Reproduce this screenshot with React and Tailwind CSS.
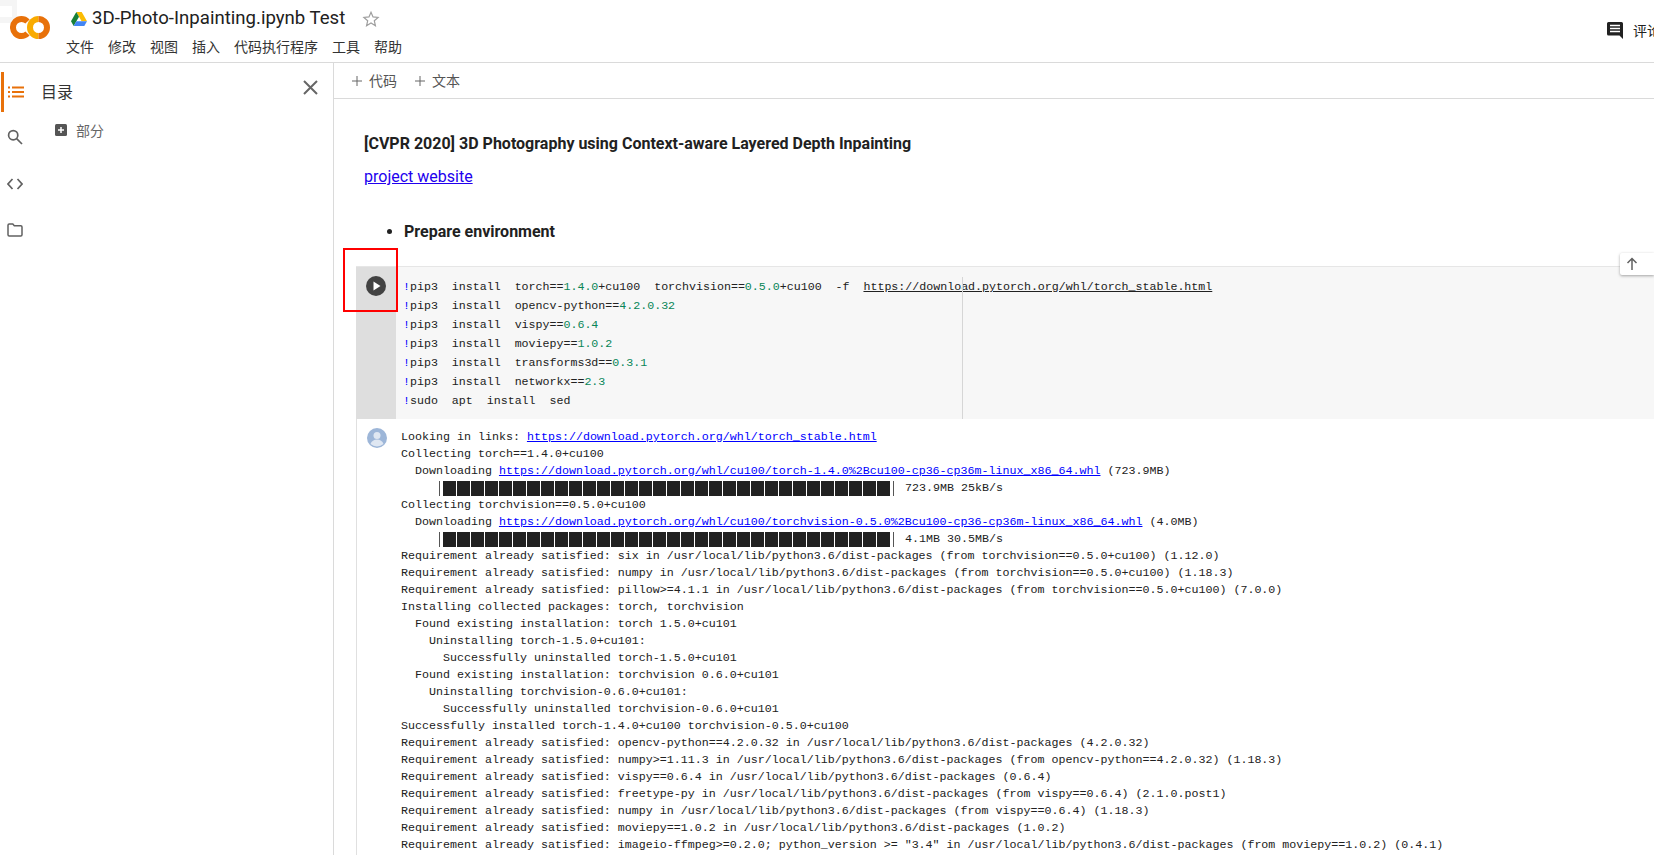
const MONO = { fontFamily: '"Liberation Mono", monospace' };

function Logo() {
  return (
    <svg width="40" height="23" viewBox="0 0 40 23" className="shrink-0">
      <path d="M17.5 5.5a8.5 8.5 0 1 0 0 12" fill="none" stroke="#e8710a" strokeWidth="6" />
      <path d="M28.5 3a8.5 8.5 0 0 0 0 17" fill="none" stroke="#f9ab00" strokeWidth="6" />
      <path d="M28.5 3a8.5 8.5 0 0 1 0 17" fill="none" stroke="#e8710a" strokeWidth="6" />
    </svg>
  );
}

function DriveIcon() {
  return (
    <svg width="16" height="14" viewBox="0 0 16 14">
      <path d="M5.3 0h5.4l5.3 9.2h-5.4z" fill="#fbbc04" />
      <path d="M5.3 0 0 9.2 2.7 14 8 4.7z" fill="#188038" />
      <path d="M2.7 14h10.6L16 9.2H5.4z" fill="#4285f4" />
    </svg>
  );
}

function Header() {
  const menus = ['文件', '修改', '视图', '插入', '代码执行程序', '工具', '帮助'];
  return (
    <header className="h-[63px] shrink-0 border-b border-[#dadada] flex items-start overflow-hidden relative">
      <div className="absolute left-0 top-0 w-[17px] h-[23px] bg-[#f5f5f5]">
        <div className="w-[12px] h-[11px] mt-[6px] bg-white" />
      </div>
      <div className="relative w-[66px] shrink-0 pl-[10px] pt-[16px]">
        <Logo />
      </div>
      <div className="flex flex-col flex-1">
        <div className="flex items-center h-[38px] pl-[5px]">
          <DriveIcon />
          <span className="ml-[5px] text-[18.6px] text-[#212121]" style={{ fontFamily: 'Roboto, sans-serif' }}>3D-Photo-Inpainting.ipynb Test</span>
          <svg width="18" height="18" viewBox="0 0 24 24" className="ml-[17px]" fill="none" stroke="#9e9e9e" strokeWidth="1.6">
            <path d="m12 3 2.7 6.2 6.8.6-5.1 4.5 1.5 6.6L12 17.4l-5.9 3.5 1.5-6.6-5.1-4.5 6.8-.6z" />
          </svg>
        </div>
        <nav className="flex gap-[14px] -mt-[2px] text-[14px] leading-[20px] text-[#333]">
          {menus.map((m) => <span key={m}>{m}</span>)}
        </nav>
      </div>
      <div className="flex items-center gap-[10px] pt-[20px] w-[47px] shrink-0 overflow-hidden whitespace-nowrap">
        <svg width="16" height="17" viewBox="0 0 16 17" className="shrink-0">
          <path d="M1.5 0h13A1.5 1.5 0 0 1 16 1.5V17l-3.5-3.5h-11A1.5 1.5 0 0 1 0 12V1.5A1.5 1.5 0 0 1 1.5 0z" fill="#212121" />
          <path d="M3 3.5h10M3 6.5h10M3 9.5h10" stroke="#fff" strokeWidth="1.4" />
        </svg>
        <span className="text-[14px] text-[#212121]">评论</span>
      </div>
    </header>
  );
}

function Rail() {
  return (
    <div className="w-[30px] shrink-0 flex flex-col pt-[9px] text-[#616161]">
      <div className="h-[40px] flex items-center justify-center border-l-[3px] border-[#e8710a] ml-px text-[#e8710a]">
        <svg width="16" height="12" viewBox="0 0 16 12" className="-ml-[2px]" fill="currentColor">
          <path d="M0 .5h2v2H0zM0 5h2v2H0zM0 9.5h2v2H0zM4 .5h12v2H4zM4 5h12v2H4zM4 9.5h12v2H4z" />
        </svg>
      </div>
      <div className="h-[46px] flex items-center justify-center mt-[2px]">
        <svg width="16" height="16" viewBox="0 0 16 16" fill="none" stroke="currentColor" strokeWidth="1.7">
          <circle cx="6.2" cy="6.2" r="4.6" />
          <path d="m9.6 9.6 5.4 5.4" />
        </svg>
      </div>
      <div className="h-[46px] flex items-center justify-center pt-[2px]">
        <svg width="16" height="12" viewBox="0 0 16 12" fill="none" stroke="currentColor" strokeWidth="1.7">
          <path d="M5.5 1 1 6l4.5 5M10.5 1 15 6l-4.5 5" />
        </svg>
      </div>
      <div className="h-[46px] flex items-center justify-center pt-[2px]">
        <svg width="16" height="14" viewBox="0 0 16 14" fill="none" stroke="currentColor" strokeWidth="1.5">
          <path d="M1 2.2C1 1.5 1.5 1 2.2 1h3.6l1.5 1.7h6.5c.7 0 1.2.5 1.2 1.2v7.9c0 .7-.5 1.2-1.2 1.2H2.2c-.7 0-1.2-.5-1.2-1.2z" />
        </svg>
      </div>
    </div>
  );
}

function Sidebar() {
  return (
    <aside className="w-[334px] shrink-0 border-r border-[#dadada] flex">
      <Rail />
      <div className="flex-1 flex flex-col">
        <div className="flex items-center justify-between h-[50px] pl-[11px] pr-[15px] pt-[9px]">
          <span className="text-[16px] text-[#333] -mt-[4px]">目录</span>
          <svg width="15" height="15" viewBox="0 0 15 15" stroke="#666" strokeWidth="2" className="-mt-[11px]">
            <path d="m1 1 13 13M14 1 1 14" />
          </svg>
        </div>
        <div className="flex items-center gap-[9px] pl-[25px] mt-[7px] text-[14px] leading-[20px] text-[#666]">
          <svg width="12" height="12" viewBox="0 0 12 12">
            <rect width="12" height="12" rx="1.5" fill="#555" />
            <path d="M6 3v6M3 6h6" stroke="#fff" strokeWidth="1.5" />
          </svg>
          <span>部分</span>
        </div>
      </div>
    </aside>
  );
}

// 代码单元的内容，数字版本号要上绿色
function Version({ children }) {
  return <span className="text-[#098658]">{children}</span>;
}

function CodeLine({ children }) {
  return <div className="h-[19px] leading-[19px]"><span className="text-[#0000ff]">!</span>{children}</div>;
}

function CodeCell() {
  return (
    <div className="flex h-[153px] ml-[22px] relative border-t border-[#e6e6e6]">
      <div className="w-[40px] shrink-0 bg-[#dedede] flex justify-center pt-[9px]">
        <svg width="20" height="20" viewBox="0 0 20 20">
          <circle cx="10" cy="10" r="10" fill="#424242" />
          <path d="M7.5 5.5v9l7-4.5z" fill="#fff" />
        </svg>
      </div>
      <div className="flex-1 bg-[#f7f7f7] pl-[7px] pt-[10px] text-[11.64px] whitespace-pre text-[#212121] relative" style={MONO}>
        <CodeLine>pip3  install  torch==<Version>1.4.0</Version>+cu100  torchvision==<Version>0.5.0</Version>+cu100  -f  <span className="underline">https://download.pytorch.org/whl/torch_stable.html</span></CodeLine>
        <CodeLine>pip3  install  opencv-python==<Version>4.2.0.32</Version></CodeLine>
        <CodeLine>pip3  install  vispy==<Version>0.6.4</Version></CodeLine>
        <CodeLine>pip3  install  moviepy==<Version>1.0.2</Version></CodeLine>
        <CodeLine>pip3  install  transforms3d==<Version>0.3.1</Version></CodeLine>
        <CodeLine>pip3  install  networkx==<Version>2.3</Version></CodeLine>
        <CodeLine>sudo  apt  install  sed</CodeLine>
        <div className="absolute left-[566px] top-[10px] bottom-0 w-px bg-[#d6d6d6]" />
      </div>
      <div className="absolute right-0 -top-[14px] w-[34px] h-[22px] bg-white rounded-l-[2px] shadow-[0_1px_3px_rgba(0,0,0,0.35)] flex items-center pl-[5px] z-10">
        <svg width="14" height="14" viewBox="0 0 14 14" fill="none" stroke="#616161" strokeWidth="1.5">
          <path d="M7 13V1.5M2.5 6 7 1.5 11.5 6" />
        </svg>
      </div>
    </div>
  );
}

function Link({ children }) {
  return <span className="text-[#0000ff] underline">{children}</span>;
}

function ProgressBar({ label }) {
  return (
    <div className="h-[17px] flex items-center pl-[38px]">
      <div className="w-px h-[15px] bg-[#555]" />
      <div className="flex gap-px ml-[3px]">
        {Array.from({ length: 32 }).map((_, i) => (
          <div key={i} className="w-[13px] h-[15px] bg-[#212121]" />
        ))}
      </div>
      <div className="w-px h-[15px] bg-[#555] ml-[3px]" />
      <span className="ml-[11px]">{label}</span>
    </div>
  );
}

const satisfied = 'Requirement already satisfied: ';

const outputLines = [
  satisfied + 'six in /usr/local/lib/python3.6/dist-packages (from torchvision==0.5.0+cu100) (1.12.0)',
  satisfied + 'numpy in /usr/local/lib/python3.6/dist-packages (from torchvision==0.5.0+cu100) (1.18.3)',
  satisfied + 'pillow>=4.1.1 in /usr/local/lib/python3.6/dist-packages (from torchvision==0.5.0+cu100) (7.0.0)',
  'Installing collected packages: torch, torchvision',
  '  Found existing installation: torch 1.5.0+cu101',
  '    Uninstalling torch-1.5.0+cu101:',
  '      Successfully uninstalled torch-1.5.0+cu101',
  '  Found existing installation: torchvision 0.6.0+cu101',
  '    Uninstalling torchvision-0.6.0+cu101:',
  '      Successfully uninstalled torchvision-0.6.0+cu101',
  'Successfully installed torch-1.4.0+cu100 torchvision-0.5.0+cu100',
  satisfied + 'opencv-python==4.2.0.32 in /usr/local/lib/python3.6/dist-packages (4.2.0.32)',
  satisfied + 'numpy>=1.11.3 in /usr/local/lib/python3.6/dist-packages (from opencv-python==4.2.0.32) (1.18.3)',
  satisfied + 'vispy==0.6.4 in /usr/local/lib/python3.6/dist-packages (0.6.4)',
  satisfied + 'freetype-py in /usr/local/lib/python3.6/dist-packages (from vispy==0.6.4) (2.1.0.post1)',
  satisfied + 'numpy in /usr/local/lib/python3.6/dist-packages (from vispy==0.6.4) (1.18.3)',
  satisfied + 'moviepy==1.0.2 in /usr/local/lib/python3.6/dist-packages (1.0.2)',
  satisfied + 'imageio-ffmpeg>=0.2.0; python_version >= "3.4" in /usr/local/lib/python3.6/dist-packages (from moviepy==1.0.2) (0.4.1)',
];

function Output() {
  return (
    <div className="flex flex-1 ml-[22px] border-l border-[#e0e0e0]">
      <div className="w-[39px] shrink-0 flex justify-center pt-[9px]">
        <svg width="20" height="20" viewBox="0 0 20 20">
          <circle cx="10" cy="10" r="10" fill="#9db6d8" />
          <circle cx="10" cy="7.5" r="3.5" fill="#dfe7f2" />
          <path d="M3.5 16c1-3 3.5-4.5 6.5-4.5s5.500 1.500 6.500 4.500a10 10 0 0 1-13 0z" fill="#dfe7f2" />
        </svg>
      </div>
      <div className="flex-1 pl-[5px] pt-[10px] text-[11.66px] leading-[17px] whitespace-pre text-[#212121]" style={MONO}>
        <div className="h-[17px]">Looking in links: <Link>https://download.pytorch.org/whl/torch_stable.html</Link></div>
        <div className="h-[17px]">Collecting torch==1.4.0+cu100</div>
        <div className="h-[17px]">  Downloading <Link>https://download.pytorch.org/whl/cu100/torch-1.4.0%2Bcu100-cp36-cp36m-linux_x86_64.whl</Link> (723.9MB)</div>
        <ProgressBar label="723.9MB 25kB/s" />
        <div className="h-[17px]">Collecting torchvision==0.5.0+cu100</div>
        <div className="h-[17px]">  Downloading <Link>https://download.pytorch.org/whl/cu100/torchvision-0.5.0%2Bcu100-cp36-cp36m-linux_x86_64.whl</Link> (4.0MB)</div>
        <ProgressBar label="4.1MB 30.5MB/s" />
        {outputLines.map((line, i) => (
          <div key={i} className="h-[17px]">{line}</div>
        ))}
      </div>
    </div>
  );
}

function Plus() {
  return (
    <svg width="10" height="10" viewBox="0 0 10 10" stroke="#666" strokeWidth="1" className="shrink-0 mr-[7px]">
      <path d="M5 0v10M0 5h10" />
    </svg>
  );
}

function Notebook() {
  return (
    <main className="flex-1 min-w-0 flex flex-col overflow-hidden">
      <div className="h-[36px] shrink-0 border-b border-[#dadada] flex items-center pl-[18px] text-[14px] text-[#555]">
        <Plus />
        <span className="mr-[18px]">代码</span>
        <Plus />
        <span>文本</span>
      </div>
      <div className="pl-[30px] pt-[34px] h-[167px] shrink-0 text-[16px] text-[#212121]" style={{ fontFamily: 'Roboto, sans-serif' }}>
        <h1 className="font-bold leading-[22px]">[CVPR 2020] 3D Photography using Context-aware Layered Depth Inpainting</h1>
        <a className="block mt-[11px] leading-[22px] text-[#2200ee] underline">project website</a>
        <ul className="list-disc pl-[40px] mt-[33px]">
          <li className="font-bold leading-[22px]">Prepare environment</li>
        </ul>
      </div>
      <CodeCell />
      <Output />
    </main>
  );
}

export default function App() {
  return (
    <div className="w-[1654px] h-[855px] overflow-hidden bg-white flex flex-col relative" style={{ fontFamily: '"Noto Sans CJK SC", sans-serif' }}>
      <Header />
      <div className="flex flex-1 min-h-0">
        <Sidebar />
        <Notebook />
      </div>
      <div className="absolute left-[343px] top-[248px] w-[55px] h-[64px] border-2 border-[#ff0000] z-20" />
    </div>
  );
}
